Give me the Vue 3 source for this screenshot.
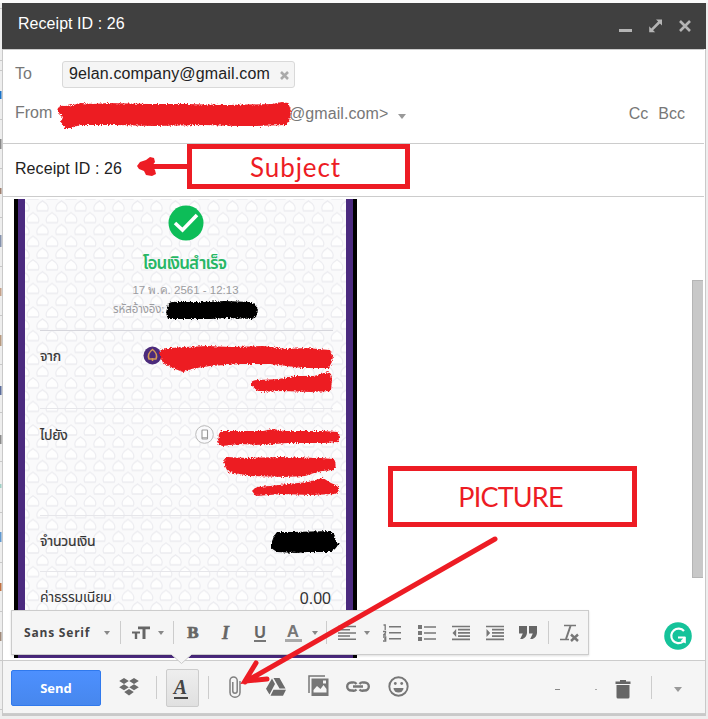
<script setup>
const rowLines = [8, 60, 70, 119, 168, 217, 266, 315, 364, 412, 461, 512, 562, 611, 660, 709]
const slivers = [
  { y: 91, h: 8, c: '#1a73c8' }, { y: 139, h: 10, c: '#8a8a8a' }, { y: 188, h: 6, c: '#a08070' },
  { y: 235, h: 12, c: '#8592ad' }, { y: 288, h: 8, c: '#c5a18a' }, { y: 335, h: 11, c: '#b79a80' },
  { y: 386, h: 9, c: '#5b6c9b' }, { y: 435, h: 9, c: '#8a8a8a' }, { y: 484, h: 4, c: '#9fd0c5' },
  { y: 532, h: 10, c: '#5f98d0' }, { y: 583, h: 8, c: '#c07040' }, { y: 632, h: 9, c: '#a08a7a' }
]
</script>

<template>
  <div class="page">
    <svg class="behind" width="3" height="719">
      <rect v-for="y in rowLines" :key="y" x="0" :y="y" width="3" height="1" fill="#c8c8c8" />
      <rect v-for="s in slivers" :key="'s' + s.y" x="0" :y="s.y" width="1.5" :height="s.h" :fill="s.c" />
    </svg>
    <section class="window">
      <header class="titlebar">
        <span class="title">Receipt ID : 26</span>
        <svg class="controls" width="80" height="20" viewBox="0 0 80 20">
          <rect x="4" y="13" width="13" height="3" fill="#b5b5b5" />
          <path d="M41 3.500h6v6l-2.100-2.100-6.800 6.800 2.100 2.100h-6v-6l2.100 2.100 6.800-6.800z" fill="#b5b5b5" />
          <path d="M65 5l10 10M75 5L65 15" stroke="#b5b5b5" stroke-width="2.600" />
        </svg>
      </header>

      <div class="recipients">
        <div class="to">
          <span class="label">To</span>
          <span class="chip"><span class="addr">9elan.company@gmail.com</span>
            <svg width="9" height="9" viewBox="0 0 9 9"><path d="M1 1l7 7M8 1L1 8" stroke="#aaa" stroke-width="2.6" /></svg>
          </span>
        </div>
        <div class="from">
          <span class="label">From</span>
          <span class="domain">@gmail.com&gt;</span>
          <i class="caret big"></i>
          <span class="cc">Cc</span><span class="bcc">Bcc</span>
        </div>
      </div>
      <div class="subject">Receipt ID : 26</div>

      <div class="body">
        <div class="phone">
          <div class="receipt">
            <svg class="pattern" width="321" height="456">
              <defs>
                <pattern id="leaves" width="19" height="23.6" patternUnits="userSpaceOnUse" x="8" y="1">
                  <g fill="#fefefe" stroke="#ececf0" stroke-width="1.3">
                    <path d="M9.500 .8C5 3.500 2.500 7.500 4.300 10.800h10.400C16.500 7.500 14 3.500 9.500 .8z" />
                    <path d="M0 12.600C-4.500 15.300-7 19.300-5.200 22.600h10.400C7 19.300 4.500 15.300 0 12.600zM19 12.600c-4.500 2.700-7 6.700-5.200 10h10.400C26 19.300 23.500 15.300 19 12.600z" />
                  </g>
                </pattern>
              </defs>
              <rect width="321" height="456" fill="#fafafb" />
              <rect width="321" height="456" fill="url(#leaves)" />
            </svg>
            <div class="slip">
              <svg class="check" width="36" height="36" viewBox="0 0 36 36">
                <circle cx="18" cy="18" r="17.5" fill="#0dbd58" />
                <path d="M7 18l7.500 7L29 10" fill="none" stroke="#fff" stroke-width="3.6" />
              </svg>
              <div class="done">โอนเงินสำเร็จ</div>
              <div class="date">17 พ.ค. 2561 - 12:13</div>
              <div class="ref">รหัสอ้างอิง:</div>
              <div class="row sender">
                <span>จาก</span>
                <svg width="19" height="19" viewBox="0 0 19 19">
                  <circle cx="9.500" cy="9.500" r="9" fill="#4b2a7b" />
                  <path d="M9.500 3.500c-4 3-5 6-3.500 9.500h7c1.500-3.500.5-6.500-3.500-9.500zM9.500 12v3" fill="none" stroke="#d39a55" stroke-width="1.500" />
                </svg>
              </div>
              <div class="row receiver">
                <span>ไปยัง</span>
                <svg width="19" height="19" viewBox="0 0 19 19">
                  <circle cx="9.500" cy="9.500" r="8.800" fill="#fafafc" stroke="#bbb" />
                  <rect x="7" y="5" width="5.500" height="9" rx=".6" fill="#fff" stroke="#999" stroke-width="1.100" />
                  <path d="M7 12.800h5.500" stroke="#999" />
                </svg>
              </div>
              <div class="row amount"><span>จำนวนเงิน</span></div>
              <div class="row fee"><span>ค่าธรรมเนียม</span><b>0.00</b></div>
            </div>
          </div>
        </div>
        <div class="track"><div class="thumb"></div></div>
      </div>

      <footer class="actions">
        <button class="send">Send</button>
        <svg width="20" height="18" viewBox="0 0 20 18" fill="#6b6b6b">
          <path d="M5 0l4.800 3L5 6 .2 3zM15 0l4.800 3L15 6l-4.800-3zM5 6.300l4.800 3-4.800 3-4.800-3zM15 6.300l4.800 3-4.800 3-4.800-3zM10 11l4.800 3L10 17.500 5.200 14z" />
        </svg>
        <i class="sep"></i>
        <span class="textmode"><span>A</span></span>
        <i class="sep"></i>
        <svg width="12" height="22" viewBox="0 0 12 22" fill="none" stroke="#808080" stroke-width="1.500">
          <path d="M11 5v11.500a5 4.700 0 01-10 0V4.500a3.600 3.600 0 017.200 0V15a2.200 2.200 0 01-4.400 0V6" />
        </svg>
        <svg width="20" height="18" viewBox="0 0 20 18" fill="#6b6b6b">
          <path d="M6 .5L9 6 3.500 16.500 0 10.700zM7.500 0h6l6 10.500H13.500zM7.500 11.700H20L17 17.700H4.500z" />
        </svg>
        <svg class="photo" width="21" height="22" viewBox="0 0 21 22">
          <path d="M1 18V1h16" fill="none" stroke="#777" stroke-width="1.500" />
          <path fill-rule="evenodd" d="M3.500 3.500h17v17.500h-17zM5.500 17.500h13v-3.500l-3-4-3 4-3.500-3-3.500 4zM15 5.500v3h3v-3z" fill="#777" />
        </svg>
        <svg class="link" width="24" height="11" viewBox="0 0 24 11" fill="none" stroke="#777" stroke-width="2.400">
          <path d="M10.500 8.500A4 4 0 016.500 9.500H5.200a4 4 0 010-8h1.300a4 4 0 014 1.500M13.500 8.500a4 4 0 004 1h1.300a4 4 0 000-8h-1.300a4 4 0 00-4 1.500M7 5.500h10" />
        </svg>
        <svg class="smile" width="21" height="21" viewBox="0 0 21 21">
          <circle cx="10.500" cy="10.500" r="9.200" fill="none" stroke="#777" stroke-width="1.900" />
          <path d="M5.500 12a5 4.500 0 0010 0z" fill="#777" /><circle cx="7.300" cy="7.500" r="1.400" fill="#777" /><circle cx="13.700" cy="7.500" r="1.400" fill="#777" />
        </svg>
        <i></i>
        <i class="dash"></i>
        <i class="dash dot"></i>
        <svg class="trash" width="16" height="20" viewBox="0 0 16 20" fill="#666">
          <path d="M.5 2.500h4.500V1h6v1.500h4.500V5H.5zM1.500 6h13v12q0 1.500-1.500 1.500H3Q1.500 19.500 1.500 18z" />
        </svg>
        <i class="sep"></i>
        <i class="caret big"></i>
      </footer>
    </section>

    <div class="format">
      <span class="font">Sans Serif</span>
      <i class="caret"></i><i class="sep"></i>
      <svg width="18" height="14" viewBox="0 0 18 14" fill="#666"><path d="M6 .5h12v2.700h-4.500V13h-3V3.200H6zM0 5.500h8V7.500H5.200V13H2.800V7.500H0z" /></svg>
      <i class="caret"></i><i class="sep"></i>
      <span class="glyph bold">B</span>
      <span class="glyph ital">I</span>
      <span class="glyph under">U</span>
      <span class="glyph color">A</span>
      <i class="caret"></i><i class="sep"></i>
      <svg width="18" height="16" viewBox="0 0 18 16" stroke="#777" stroke-width="1.500"><path d="M0 1.500h18M0 4.700h12M0 7.900h18M0 11.100h12M0 14.300h18" /></svg>
      <i class="caret"></i>
      <svg width="18" height="18" viewBox="0 0 18 18" fill="#777">
        <path d="M6 2h12v1.600H6zM6 8h12v1.600H6zM6 14h12v1.600H6z" />
        <path d="M.5 1h1.700v5M0 7.500h2.500v1.500L.5 11h2.500M0 13h2.700v4H0M1 15h1.700" fill="none" stroke="#777" stroke-width="1.300" />
      </svg>
      <svg width="18" height="16" viewBox="0 0 18 16" fill="#777"><path d="M0 0h4v4H0zM0 6h4v4H0zM0 12h4v4H0zM6 1.200h12v1.600H6zM6 7.200h12v1.600H6zM6 13.200h12v1.600H6z" /></svg>
      <svg width="18" height="16" viewBox="0 0 18 16"><path d="M0 1.500h18M6 4.700h12M6 7.900h12M6 11.100h12M0 14.300h18" stroke="#777" stroke-width="1.700" /><path d="M4.200 4v8L.5 8z" fill="#777" /></svg>
      <svg width="18" height="16" viewBox="0 0 18 16"><path d="M0 1.500h18M6 4.700h12M6 7.900h12M6 11.100h12M0 14.300h18" stroke="#777" stroke-width="1.700" /><path d="M.5 4v8l3.700-4z" fill="#777" /></svg>
      <svg width="18" height="14" viewBox="0 0 18 14" fill="#666"><path d="M0 0h8v7q-.5 4.500-4.500 6H1.200L3.800 7.500H0zM10 0h8v7q-.5 4.500-4.500 6h-2.300l2.600-5.500H10z" /></svg>
      <i class="sep"></i>
      <svg width="19" height="18" viewBox="0 0 19 18" fill="none" stroke="#777"><path d="M4 1.500h12M0 15.500h9" stroke-width="1.700" /><path d="M10.500 2L6 15" stroke-width="2" /><path d="M11 10.500l7 6.500M18 10.500L11 17" stroke-width="2.400" /></svg>
    </div>
    <svg class="notch" width="22" height="11" viewBox="0 0 22 11"><path d="M0 0l10.500 9.500L21 0z" fill="#f5f5f5" /><path d="M1 1l9.500 8.500L20 1" fill="none" stroke="#ccc" /></svg>

    <svg class="helper" width="28" height="28" viewBox="0 0 28 28">
      <circle cx="14" cy="14" r="13.800" fill="#15c39a" />
      <path d="M20 9a7.300 7.300 0 10-1 10.700M14 15.500h6v5" fill="none" stroke="#fff" stroke-width="2.200" />
      <path d="M21.800 14.500v7l-5-3z" fill="#fff" />
    </svg>

    <svg class="ink" width="708" height="719">
      <defs>
        <filter id="rough" x="-5%" y="-30%" width="110%" height="160%">
          <feTurbulence type="fractalNoise" baseFrequency=".7" numOctaves="2" seed="4" />
          <feDisplacementMap in="SourceGraphic" scale="4" xChannelSelector="R" yChannelSelector="G" />
        </filter>
      </defs>
      <g filter="url(#rough)" fill="#ed1c24">
        <path d="M57 111q1-6 8-5l8-1 8-2 13 1 14-1 40 1 38 0 40 1 46-1 10-2 6 1 3 7-2 12-3 3-30 1-18 0-34-1-50 1-38-1-36 0-9 3-6 0-4-6 2-5z" />
        <path d="M159 353q1-5 11-5l15-1 22-1 25 1 31-1 23 3 20-1 24 2 3 6-2 9-3 3-26 0-31-4-30 0-31 2-18 3-9 3-8-3-12-6z" />
        <path d="M251 385q-1-5 7-5l22-1 14-3 20 0 14-4 3 2 1 5-1 12-20 1-29-1-23 1z" />
        <path d="M219 434l2-3 15 0 27 0 10-2 12 2 38 0 15 1 2 4-2 6-14 1-36 0-26 2-22-1-18 2-4-3z" />
        <path d="M223 462l4-5 20 1 34-1 40 1 13 1 2 5-2 6-12 1-17 5-20 1-35-1-22-4z" />
        <path d="M252 491l4-4 14-1 18-2 20-2 15-4 8 5 7 3 1 6-4 2-25 1-28-1-26 2z" />
      </g>
      <g filter="url(#rough)">
        <path d="M168 304q3-3 10-2l24 0 23-1 25 1 5 2 3 6-2 7-4 2-25-1-16 1-35 0-8 0-2-6z" />
        <path d="M271 544l3-8 3-4 15 0 38-1 4 3 2 7 3 3-4 5-4 3-24 0-10 1-20-1-6-4z" />
      </g>
      <g fill="none" stroke="#ed1c24" stroke-width="5" stroke-linecap="round">
        <path d="M190 166.500h-44" />
        <path d="M495 539L245 682M256 663l-11 18 22-2" />
      </g>
      <path d="M137 166l3-4 6-2 4-3 4 1 1 4-3 4 3 4 1 4-4 2-6-1-2-4-5-2z" fill="#ed1c24" />
    </svg>
    <div class="note subj"><span>Subject</span></div>
    <div class="note pict"><span>PICTURE</span></div>
  </div>
</template>

<style>
body { margin: 0; background: #f1f1f1; overflow: hidden; }
</style>
<style scoped>
* { box-sizing: border-box; }
svg { display: block; flex: none; }
.page { position: relative; width: 708px; height: 719px; padding: 3px 2px 0 2px; background: linear-gradient(#fafafa 3px, #eee 3px); font-family: "Liberation Sans", Arial, sans-serif; font-size: 16px; overflow: hidden; }
.behind { position: absolute; left: 0; top: 0; }
.window { position: relative; width: 704px; height: 713px; background: #fff; border: 1px solid #c9c9c9; border-width: 0 1px 2px 1px; display: flex; flex-direction: column; }
.titlebar { height: 46px; margin: 0 -1px; background: #404040; display: flex; align-items: flex-start; justify-content: space-between; padding: 11px 11px 0 16px; color: #fff; }
.title { line-height: 19px; letter-spacing: .05px; }
.controls { margin-top: 2px; }
.recipients { height: 95px; border-top: 1px solid #ccc; border-bottom: 1px solid #ccc; color: #777; width: 701px; }
.to { display: flex; padding: 11px 0 0 12px; height: 50px; }
.label { width: 47px; line-height: 26px; }
.chip { display: flex; align-items: center; justify-content: space-between; width: 233px; height: 27px; padding: 0 5px 0 6px; border: 1px solid #d9d9d9; border-radius: 3px; background: #f5f5f5; color: #222; }
.addr { letter-spacing: .14px; margin-top: -2px; }
.chip svg { margin-top: 2px; }
.from { display: flex; align-items: center; height: 27px; padding-left: 12px; }
.from .label { margin-top: -2px; width: 274px; }
.domain { letter-spacing: .08px; }
.from .caret { margin: 5px 0 0 10px; }
.cc { margin-left: auto; }
.bcc { margin: 0 19px 0 10px; }
.caret { width: 0; height: 0; border: 3px solid transparent; border-top: 4px solid #888; border-bottom: 0; }
.caret.big { border-width: 5px 4.500px 0; border-top-color: #999; }
.subject { height: 53px; width: 701px; line-height: 49px; padding-left: 12px; letter-spacing: .07px; color: #222; border-bottom: 1px solid #ccc; }
.body { display: flex; justify-content: space-between; height: 463px; padding: 2px 2px 0 11px; }
.phone { width: 343px; height: 459px; background: #000; padding: 0 4px; }
.receipt { position: relative; height: 459px; background: #4b2a7f; padding: 0 7px 3px; }
.pattern { position: absolute; left: 7px; top: 0; }
.slip { position: relative; height: 456px; width: 321px; font-family: "Noto Sans Thai", "Noto Sans", "Liberation Sans", sans-serif; display: flex; flex-direction: column; padding: 6px 13px 0 15px; }
.check { align-self: center; margin-right: 2px; }
.done { margin: 10px 4px 0 0; height: 26px; line-height: 26px; text-align: center; font-size: 17px; letter-spacing: -.85px; font-weight: 600; color: #27b765; }
.date { margin: 4px 2px 0 0; height: 18px; line-height: 18px; text-align: center; font-size: 11.500px; color: #9c9ca0; font-family: "Liberation Sans", sans-serif; }
.ref { height: 32px; line-height: 22px; padding-left: 73px; font-size: 11.500px; letter-spacing: -.1px; color: #9c9ca0; border-bottom: 1px solid #d6d6dc; }
.row { display: flex; justify-content: space-between; font-size: 14px; color: #333; line-height: 20px; border-bottom: 1px solid #e6e6ea; -webkit-text-stroke: .2px #333; }
.row span { letter-spacing: -.2px; }
.sender { height: 78px; padding-top: 16px; }
.sender svg { margin: -1px 171px 0 0; }
.receiver { height: 107px; padding-top: 17px; }
.receiver svg { margin: -1px 119px 0 0; }
.amount { height: 56px; padding-top: 16px; }
.fee { padding-top: 16px; border: 0; -webkit-text-stroke-width: 0; }
.fee b { font: 16px/22px "Liberation Sans", sans-serif; margin-right: 2px; }
.track { width: 11px; padding-top: 81px; }
.thumb { height: 298px; background: #c8c8c8; border: 1px solid #b5b5b5; border-width: 1px 0 1px 1px; }
.actions { height: 54px; width: 702px; background: #f5f5f5; border-top: 1px solid #ccc; border-bottom: 1px solid #ccc; padding-left: 8px; display: grid; align-items: center; justify-items: center; grid-template-columns: 90px 55px 1px 51px 1px 51px 32px 52px 28px 53px 1fr 40px 38px 15px 21px 1px 53px; }
.actions .sep:nth-last-child(2) { grid-column: 16; }
.actions .caret { grid-column: 17; margin: 4px 2px 0 0; }
.photo, .link, .smile { margin-top: -2px; }
.trash { margin-top: 3px; }
.send { width: 90px; height: 36px; margin-top: 2px; border: 1px solid #3079ed; border-radius: 2px; background: linear-gradient(#4d90fe, #4787ed); color: #fff; font: bold 13px "Open Sans", sans-serif; }
.sep { width: 1px; height: 23px; background: #ccc; }
.textmode { width: 33px; height: 38px; margin-top: 1px; border: 1px solid #ccc; border-radius: 2px; background: linear-gradient(#eee, #e0e0e0); display: flex; justify-content: center; }
.textmode span { font: italic bold 20px/19px "Liberation Serif", serif; color: #444; height: 21px; width: 14px; margin: 8px 4px 0 0; border-bottom: 2px solid #444; text-align: center; }
.dash { width: 5px; height: 1px; background: #888; margin-top: 4px; }
.dot { width: 2px; background: #aaa; }
.format { position: absolute; left: 11px; top: 610px; width: 578px; height: 45px; background: #f5f5f5; border: 1px solid #ccc; box-shadow: 0 1px 2px #0002; display: grid; align-items: center; justify-items: center; padding-left: 12px; grid-template-columns: 76px 14px 12px 29px 12px 12px 28px 37px 32px 34px 10px 13px 27px 14px 35px 35px 34px 33px 34px 7px 34px; }
.font { justify-self: start; font: bold 12px "Open Sans", sans-serif; letter-spacing: .8px; color: #444; white-space: nowrap; }
.glyph { color: #666; font: bold 17px/18px "Liberation Serif", serif; }
.bold { font-weight: 900; -webkit-text-stroke: .7px #666; }
.ital { font-style: italic; font-size: 18px; -webkit-text-stroke: .4px #666; }
.under { font: bold 16px/15px "Liberation Sans", sans-serif; border-bottom: 2px solid #777; height: 17px; margin-top: 2px; }
.color { font: bold 17px/15px "Liberation Sans", sans-serif; color: #777; width: 17px; text-align: center; height: 18px; border-bottom: 3px solid #aaa; }
.notch { position: absolute; left: 171px; top: 654px; }
.helper { position: absolute; left: 664px; top: 622px; }
.ink { position: absolute; left: 0; top: 0; }
.note { position: absolute; border: 5px solid #ed1c24; background: #fff; color: #ed1c24; font-family: Lato, sans-serif; display: flex; align-items: center; justify-content: center; }
.subj { left: 187px; top: 144px; width: 223px; height: 45px; font-size: 26px; letter-spacing: .9px; padding-right: 6px; }
.pict { left: 388px; top: 466px; width: 249px; height: 61px; font-size: 27px; letter-spacing: -.8px; padding-right: 4px; }
</style>
